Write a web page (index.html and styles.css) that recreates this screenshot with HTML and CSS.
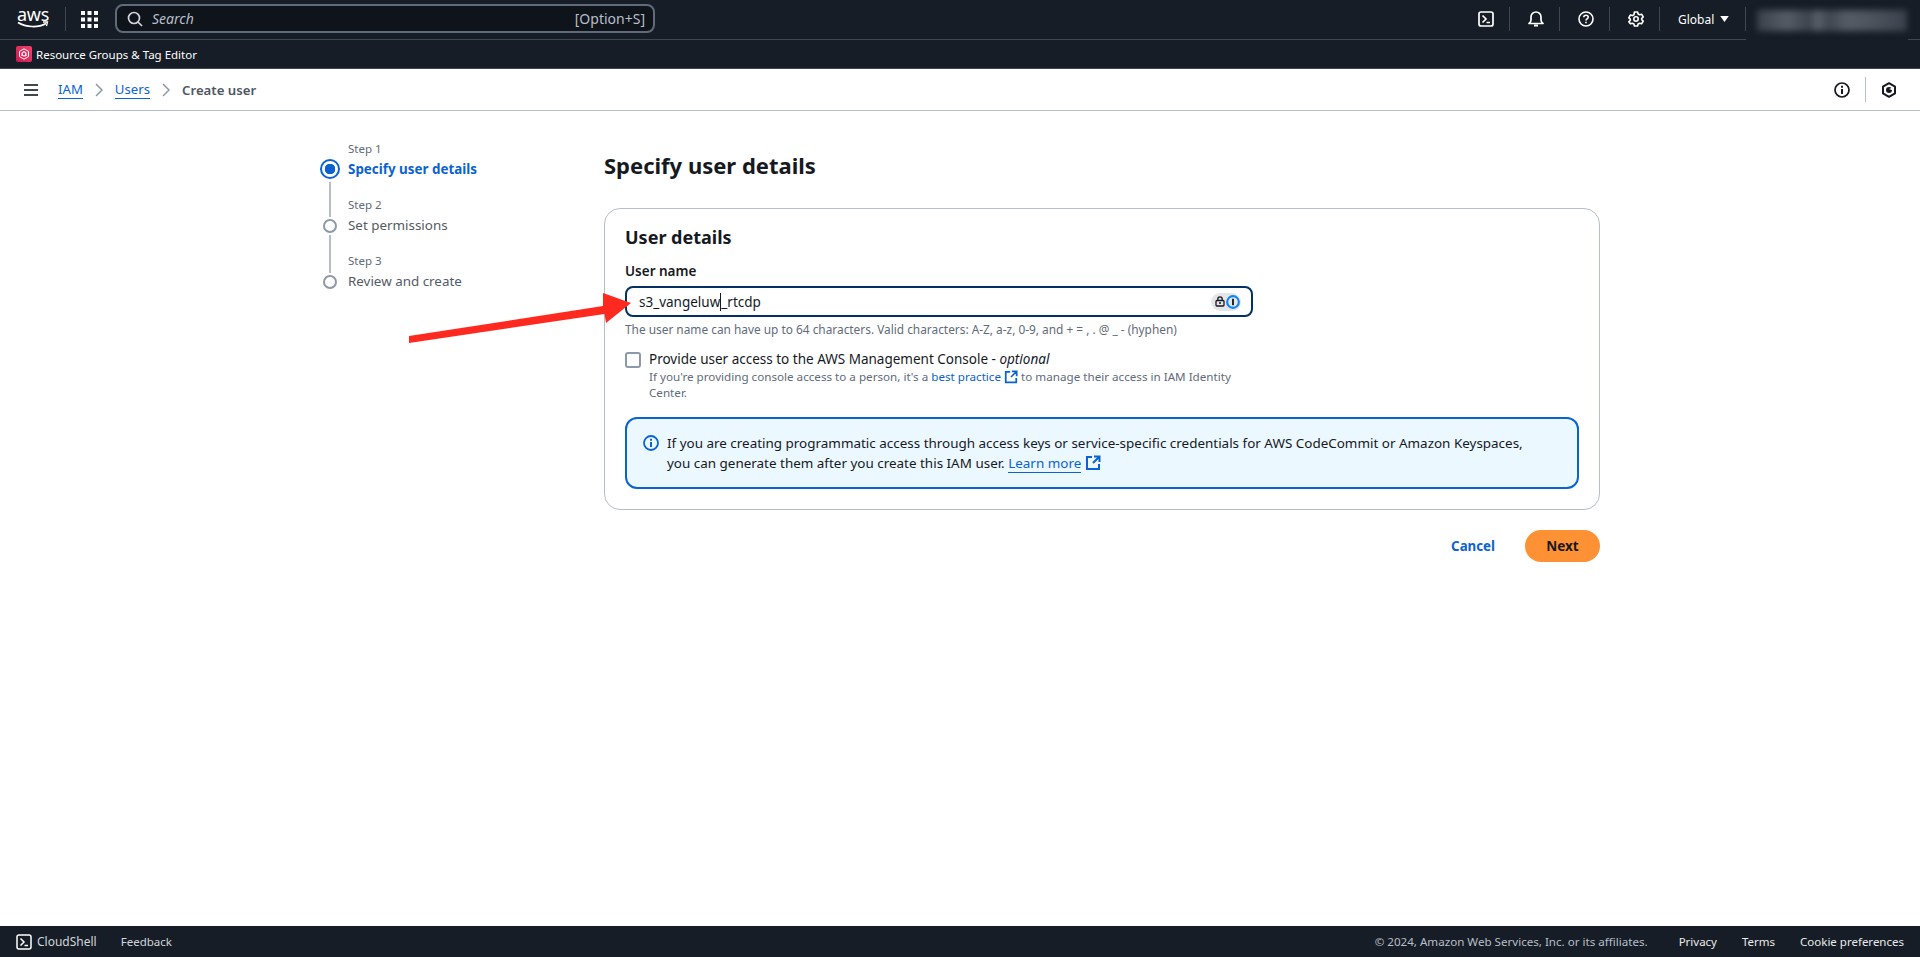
FILE: index.html
```html
<!DOCTYPE html>
<html lang="en">

<head>
    <meta charset="UTF-8">
    <meta name="viewport" content="width=device-width, initial-scale=1.0">
    <title>Create user | IAM</title>
    <link rel="stylesheet" href="styles.css">
</head>

<body>
    <header class="top-nav">
        <div class="aws-logo">
            <span class="aws-word">aws</span>
            <svg class="aws-smile" viewBox="0 0 32 8" fill="none" stroke="#fff" stroke-width="1.6">
                <path d="M1 1.5c8 5 20 5.500 28 1" />
                <path d="M26 1h4.500l-1 4" stroke-width="1.300" />
            </svg>
        </div>
        <span class="nav-sep"></span>
        <svg class="grid-icon" viewBox="0 0 17 17" fill="#fff">
            <rect x="0" y="0" width="4" height="4" />
            <rect x="6.500" y="0" width="4" height="4" />
            <rect x="13" y="0" width="4" height="4" />
            <rect x="0" y="6.500" width="4" height="4" />
            <rect x="6.500" y="6.500" width="4" height="4" />
            <rect x="13" y="6.500" width="4" height="4" />
            <rect x="0" y="13" width="4" height="4" />
            <rect x="6.500" y="13" width="4" height="4" />
            <rect x="13" y="13" width="4" height="4" />
        </svg>
        <div class="search">
            <svg class="search-icon" viewBox="0 0 16 16" fill="none" stroke="#d1d5db" stroke-width="1.700">
                <circle cx="7" cy="7" r="5.500" />
                <path d="M11 11l4 4" />
            </svg>
            <span class="search-text">Search</span>
            <span class="search-key">[Option+S]</span>
        </div>
        <div class="nav-right">
            <div class="nav-cell">
                <svg class="icon-16" viewBox="0 0 16 16" fill="none" stroke="#fff" stroke-width="1.700">
                    <rect x="1" y="1" width="14" height="14" rx="2" />
                    <path d="M4.500 4.500L8 8l-3.500 3.500M8.500 11.500H12" />
                </svg>
            </div>
            <div class="nav-cell">
                <svg class="icon-16" viewBox="0 0 16 16" fill="none" stroke="#fff" stroke-width="1.700">
                    <path d="M1 12.500c1.500-1 2-2 2-3.500V6a5 5 0 0 1 10 0v3c0 1.500.5 2.500 2 3.500z" stroke-linejoin="round" />
                    <path d="M6 14.500h4" stroke-width="2" />
                </svg>
            </div>
            <div class="nav-cell">
                <svg class="icon-16" viewBox="0 0 16 16" fill="none" stroke="#fff" stroke-width="1.600">
                    <circle cx="8" cy="8" r="7" />
                    <path d="M5.800 6.200C5.800 5 6.800 4.200 8 4.200s2.200.8 2.200 2c0 1.700-2.200 1.700-2.200 3.300" />
                    <path d="M8 10.800v1.500" />
                </svg>
            </div>
            <div class="nav-cell">
                <svg class="icon-16" viewBox="0 0 16 16" fill="none" stroke="#fff" stroke-width="1.600" stroke-linejoin="round">
                    <path d="M6.400 1h3.200l.5 2 1.500.8 2-.6 1.600 2.800-1.500 1.400v1.200l1.500 1.400-1.600 2.800-2-.6-1.500.8-.5 2H6.400l-.5-2-1.500-.8-2 .6L.8 10.800l1.500-1.400V8.200L.8 6.800 2.400 4l2 .6 1.500-.8z" />
                    <circle cx="8" cy="8" r="2.200" />
                </svg>
            </div>
            <div class="nav-region">
                <span>Global</span>
                <svg class="region-caret" viewBox="0 0 10 7" fill="#fff">
                    <path d="M0 0h10L5 7z" />
                </svg>
            </div>
            <div class="account">
                <span class="account-blur"></span>
            </div>
        </div>
    </header>

    <div class="service-bar">
        <span class="service-icon">
            <svg viewBox="0 0 16 16" fill="none" stroke="#fff">
                <path d="M8 2.800l4.500 2.600v5.200L8 13.200l-4.500-2.600V5.400z" stroke-width="1" />
                <circle cx="8" cy="8" r="2" stroke-width="1.200" />
                <path d="M8 5v1M5.500 9.500l1-.6M10.500 9.500l-1-.6" stroke-width="1" />
            </svg>
        </span>
        <span>Resource Groups &amp; Tag Editor</span>
    </div>

    <div class="crumb-bar">
        <svg class="menu-icon" viewBox="0 0 14 12" fill="#414750">
            <rect width="14" height="2" />
            <rect y="5" width="14" height="2" />
            <rect y="10" width="14" height="2" />
        </svg>
        <a class="crumb-link crumb-iam" href="#">IAM</a>
        <svg class="crumb-arrow" viewBox="0 0 8 14" fill="none" stroke="#8d99a8" stroke-width="1.500">
            <path d="M1 1l6 6-6 6" />
        </svg>
        <a class="crumb-link" href="#">Users</a>
        <svg class="crumb-arrow" viewBox="0 0 8 14" fill="none" stroke="#8d99a8" stroke-width="1.500">
            <path d="M1 1l6 6-6 6" />
        </svg>
        <span class="crumb-current">Create user</span>
        <div class="crumb-tools">
            <svg class="icon-16" viewBox="0 0 16 16" fill="none" stroke="#16191f" stroke-width="1.700">
                <circle cx="8" cy="8" r="7" />
                <path d="M8 7v5" stroke-width="2" />
                <path d="M8 3.800v2" stroke-width="2" />
            </svg>
            <span class="crumb-tools-sep"></span>
            <svg class="icon-16" viewBox="0 0 16 16" fill="none" stroke="#16191f" stroke-width="2">
                <path d="M8 1.200l6 3.400v6.800l-6 3.400-6-3.400V4.600z" stroke-linejoin="round" />
                <circle cx="8" cy="8" r="3" fill="#16191f" stroke="none" />
                <path d="M8 7l4-1.500v3z" fill="#fff" stroke="none" />
            </svg>
        </div>
    </div>

    <main class="wizard">
        <ol class="steps">
            <li class="step step-active">
                <div class="step-marker step-marker-first">
                    <span class="dot-active"></span>
                    <span class="step-line step-line-rest-first"></span>
                </div>
                <div>
                    <div class="step-no">Step 1</div>
                    <div class="step-name">Specify user details</div>
                </div>
            </li>
            <li class="step">
                <div class="step-marker">
                    <span class="step-line step-line-top"></span>
                    <span class="dot"></span>
                    <span class="step-line step-line-rest"></span>
                </div>
                <div>
                    <div class="step-no">Step 2</div>
                    <div class="step-name">Set permissions</div>
                </div>
            </li>
            <li class="step">
                <div class="step-marker">
                    <span class="step-line step-line-top"></span>
                    <span class="dot"></span>
                </div>
                <div>
                    <div class="step-no">Step 3</div>
                    <div class="step-name">Review and create</div>
                </div>
            </li>
        </ol>

        <section class="content">
            <h1 class="page-title">Specify user details</h1>
            <div class="card">
                <h2 class="card-title">User details</h2>
                <div class="field-label">User name</div>
                <div class="field-input">
                    <span>s3_vangeluw</span><span class="caret"></span><span>_rtcdp</span>
                    <span class="pw-badge">
                        <svg class="pw-lock" viewBox="0 0 10 11" fill="none" stroke="#16191f" stroke-width="1.300">
                            <rect x="1" y="4.500" width="8" height="5.500" rx="1" />
                            <path d="M2.800 4.500V3a2.200 2.200 0 0 1 4.400 0v1.500" />
                            <path d="M4 7h2" />
                        </svg>
                        <svg class="pw-one" viewBox="0 0 12 12" fill="none">
                            <circle cx="6" cy="6" r="5" stroke="#0a84ff" stroke-width="1.800" />
                            <path d="M6 3.200v5.600" stroke="#16191f" stroke-width="1.600" />
                        </svg>
                    </span>
                </div>
                <div class="hint">The user name can have up to 64 characters. Valid characters: A-Z, a-z, 0-9, and + = , . @ _ - (hyphen)</div>

                <div class="check-row">
                    <span class="checkbox"></span>
                    <div>
                        <div class="check-label">Provide user access to the AWS Management Console - <em>optional</em></div>
                        <div class="check-desc">If you're providing console access to a person, it's a <a class="link-plain" href="#">best practice</a>
                            <svg class="ext-icon ext-small" viewBox="0 0 16 16" fill="none" stroke="#0b63d1" stroke-width="2">
                                <path d="M7 2H2v12h12V9M9 1.500h5.500V7M14 2L8 8" />
                            </svg>
                            to manage their access in IAM Identity<br>Center.</div>
                    </div>
                </div>

                <div class="alert">
                    <svg class="alert-icon" viewBox="0 0 16 16" fill="none" stroke="#0b63d1" stroke-width="1.800">
                        <circle cx="8" cy="8" r="7" />
                        <path d="M8 7v5M8 3.800v2" stroke-width="2" />
                    </svg>
                    <div class="alert-text">If you are creating programmatic access through access keys or service-specific credentials for AWS CodeCommit or Amazon Keyspaces,<br>you can generate them after you create this IAM user. <a class="link-under" href="#">Learn more</a>
                        <svg class="ext-icon" viewBox="0 0 16 16" fill="none" stroke="#0b63d1" stroke-width="2">
                            <path d="M7 2H2v12h12V9M9 1.500h5.500V7M14 2L8 8" />
                        </svg>
                    </div>
                </div>
            </div>
            <div class="actions">
                <a class="btn-cancel" href="#">Cancel</a>
                <button class="btn-next" type="button">Next</button>
            </div>
        </section>
    </main>

    <footer class="footer">
        <svg class="icon-16" viewBox="0 0 16 16" fill="none" stroke="#fff" stroke-width="1.500">
            <rect x="1" y="1" width="14" height="14" rx="2" />
            <path d="M4.500 4.500L8 8l-3.500 3.500M8.500 11.500H12" />
        </svg>
        <span class="foot-shell">CloudShell</span>
        <span class="foot-feedback">Feedback</span>
        <span class="foot-copy">© 2024, Amazon Web Services, Inc. or its affiliates.</span>
        <span class="foot-link foot-privacy">Privacy</span>
        <span class="foot-link foot-terms">Terms</span>
        <span class="foot-link foot-cookie">Cookie preferences</span>
    </footer>

    <!-- red annotation drawn over the screenshot -->
    <svg class="annotation" viewBox="0 0 240 60">
        <path d="M2 48L196 18V5L224 15 199 35l-1.500-9L2 55z" fill="#ff2a1f" />
    </svg>
</body>

</html>
```

FILE: styles.css
```css
* {
    box-sizing: border-box;
}

body {
    margin: 0;
    padding: 0;
    height: 100vh;
    display: flex;
    flex-direction: column;
    font-family: "Noto Sans", "Open Sans", sans-serif;
    font-size: 13.5px;
    color: #16191f;
    background: #fff;
    overflow: hidden;
}

a {
    text-decoration: none;
    color: #0b63d1;
}

.icon-16 {
    width: 16px;
    height: 16px;
    flex: none;
}

/* top nav */
.top-nav {
    height: 40px;
    flex: none;
    display: flex;
    align-items: flex-start;
    padding-left: 17px;
    background: #161d26;
    border-bottom: 1px solid #414750;
}

.aws-logo {
    width: 32px;
    height: 39px;
    display: flex;
    flex-direction: column;
    align-items: center;
    padding-top: 6px;
}

.aws-word {
    color: #fff;
    font-size: 18px;
    line-height: 16px;
    letter-spacing: -0.3px;
}

.aws-smile {
    width: 32px;
    height: 8px;
    margin-top: -1px;
}

.nav-sep {
    width: 1px;
    height: 24px;
    margin: 7px 16px 0;
    background: #414750;
}

.grid-icon {
    width: 17px;
    height: 17px;
    margin: 11px 0 0 -1px;
}

.search {
    width: 540px;
    height: 29px;
    margin: 4px 0 0 17px;
    padding: 0 8px 0 10px;
    display: flex;
    align-items: center;
    background: #0f141a;
    border: 2px solid #5f6b7a;
    border-radius: 8px;
    color: #b6bec9;
}

.search-icon {
    width: 16px;
    height: 16px;
}

.search-text {
    margin-left: 9px;
    font-style: italic;
    font-size: 14px;
}

.search-key {
    margin-left: auto;
    font-size: 14px;
}

.nav-right {
    margin-left: auto;
    display: flex;
    align-items: flex-start;
    padding-right: 12px;
}

.nav-cell {
    width: 50px;
    height: 24px;
    margin-top: 7px;
    padding-left: 3px;
    display: flex;
    align-items: center;
    justify-content: center;
    border-right: 1px solid #414750;
}

.nav-region {
    width: 86px;
    height: 24px;
    margin-top: 7px;
    padding-left: 18px;
    display: flex;
    align-items: center;
    color: #fff;
    font-size: 12px;
    border-right: 1px solid #414750;
}

.region-caret {
    width: 9px;
    height: 6px;
    margin-left: 6px;
}

.account {
    width: 162px;
    height: 40px;
    padding: 10px 0 0 11px;
    background: #161d26;
}

.account-blur {
    display: block;
    width: 150px;
    height: 21px;
    filter: blur(3px);
    background: linear-gradient(90deg, #3a414c 0, #565c66 20%, #3d434d 35%, #5b616b 40%, #3f4650 48%, #565c66 60%, #4a515b 80%, #3a414c 100%);
}

/* service shortcut bar */
.service-bar {
    height: 29px;
    flex: none;
    display: flex;
    align-items: center;
    padding-left: 16px;
    color: #fff;
    font-size: 11.5px;
    background: #161d26;
    border-bottom: 1px solid #414750;
}

.service-icon {
    width: 16px;
    height: 16px;
    margin-right: 4px;
    border-radius: 2px;
    background: linear-gradient(45deg, #d1184f, #f0426f);
    display: flex;
}

.service-icon svg {
    width: 16px;
    height: 16px;
}

/* breadcrumbs */
.crumb-bar {
    height: 42px;
    flex: none;
    display: flex;
    align-items: center;
    padding: 0 23px 0 24px;
    font-size: 13.2px;
    border-bottom: 1px solid #b6bec9;
}

.menu-icon {
    width: 14px;
    height: 12px;
    margin-right: 20px;
}

.crumb-link {
    color: #0b63d1;
    border-bottom: 1px solid #0b63d1;
    line-height: 18px;
}

.crumb-arrow {
    width: 8px;
    height: 14px;
    margin: 0 12px;
}

.crumb-current {
    color: #4f5663;
    font-weight: 600;
}

.crumb-tools {
    margin-left: auto;
    display: flex;
    align-items: center;
}

.crumb-tools-sep {
    width: 1px;
    height: 25px;
    margin: 0 15px;
    background: #b6bec9;
}

/* wizard */
.wizard {
    flex: 1;
    display: flex;
    padding: 30px 320px 0;
}

.steps {
    width: 284px;
    flex: none;
    margin: 0;
    padding: 0;
    list-style: none;
}

.step {
    height: 56px;
    display: flex;
}

.step-marker {
    width: 20px;
    margin-right: 8px;
    display: flex;
    flex-direction: column;
    align-items: center;
}

.step-marker-first {
    padding-top: 18px;
}

.step-line {
    width: 2px;
    background: #b6bec9;
}

.step-line-top {
    height: 20px;
    margin-bottom: 2px;
}

.step-line-rest {
    flex: 1;
    margin-top: 2px;
}

.step-line-rest-first {
    flex: 1;
    margin-top: 3px;
}

.dot {
    width: 14px;
    height: 14px;
    flex: none;
    border: 2px solid #8d99a8;
    border-radius: 50%;
}

.dot-active {
    width: 20px;
    height: 20px;
    flex: none;
    border: 2px solid #0b63d1;
    border-radius: 50%;
    background: radial-gradient(circle, #0b63d1 0 5px, #fff 5.500px);
}

.step-no {
    font-size: 11.5px;
    line-height: 16px;
    color: #5f6b7a;
}

.step-name {
    line-height: 24px;
    font-size: 13.4px;
    color: #545b64;
}

.step-active .step-name {
    color: #0b63d1;
    font-weight: 700;
}

.content {
    flex: 1;
    padding-top: 9px;
}

.page-title {
    margin: 0;
    font-size: 22px;
    line-height: 30px;
    font-weight: 700;
}

.card {
    margin-top: 28px;
    padding: 16px 20px 20px;
    border: 1px solid #b6bec9;
    border-radius: 16px;
}

.card-title {
    margin: 0;
    font-size: 18px;
    line-height: 24px;
    font-weight: 700;
}

.field-label {
    margin-top: 12px;
    line-height: 20px;
    font-weight: 600;
}

.field-input {
    width: 628px;
    height: 31px;
    margin-top: 5px;
    padding: 0 10px 0 12px;
    display: flex;
    align-items: center;
    border: 2px solid #033160;
    border-radius: 8px;
}

.caret {
    width: 1px;
    height: 18px;
    background: #16191f;
}

.pw-badge {
    margin-left: auto;
    width: 30px;
    height: 18px;
    padding: 0 1px 0 4px;
    display: flex;
    align-items: center;
    justify-content: space-between;
    background: #e4e6e9;
    border-radius: 9px;
}

.pw-lock {
    width: 10px;
    height: 11px;
}

.pw-one {
    width: 14px;
    height: 14px;
}

.hint {
    margin-top: 4px;
    font-size: 11.87px;
    line-height: 16px;
    color: #5f6b7a;
}

.check-row {
    margin-top: 12px;
    display: flex;
}

.checkbox {
    width: 16px;
    height: 16px;
    flex: none;
    margin: 3px 8px 0 0;
    border: 2px solid #8d99a8;
    border-radius: 3px;
}

.check-label {
    line-height: 20px;
}

.check-desc {
    font-size: 11.65px;
    line-height: 16px;
    color: #5f6b7a;
}

.link-plain {
    color: #0b63d1;
}

.ext-icon {
    width: 16px;
    height: 16px;
    vertical-align: -3px;
}

.ext-small {
    width: 14px;
    height: 14px;
}

.link-under {
    color: #0b63d1;
    border-bottom: 1px solid #0b63d1;
}

.alert {
    margin-top: 16px;
    padding: 14px 16px 14px 16px;
    display: flex;
    background: #ebf8ff;
    border: 2px solid #0b63d1;
    border-radius: 12px;
}

.alert-icon {
    width: 16px;
    height: 16px;
    flex: none;
    margin: 2px 8px 0 0;
}

.alert-text {
    font-size: 13.45px;
    line-height: 20px;
}

.actions {
    margin-top: 20px;
    display: flex;
    justify-content: flex-end;
    align-items: center;
}

.btn-cancel {
    margin-right: 30px;
    font-size: 13.3px;
    font-weight: 700;
}

.btn-next {
    width: 75px;
    height: 32px;
    padding: 0;
    font: inherit;
    font-weight: 700;
    color: #16191f;
    background: #ff9135;
    border: 0;
    border-radius: 16px;
}

/* footer */
.footer {
    height: 31px;
    flex: none;
    display: flex;
    align-items: center;
    padding: 0 16px;
    color: #d1d5db;
    font-size: 11.5px;
    background: #161d26;
}

.foot-shell {
    margin-left: 5px;
    font-size: 12px;
}

.foot-feedback {
    margin-left: 24px;
}

.foot-copy {
    margin-left: auto;
    font-size: 11.6px;
    color: #b6bec9;
}

.foot-link {
    color: #e9ebed;
}

.foot-privacy {
    margin-left: 31px;
}

.foot-terms,
.foot-cookie {
    margin-left: 25px;
}

.annotation {
    position: absolute;
    left: 407px;
    top: 288px;
    width: 240px;
    height: 60px;
}
```
